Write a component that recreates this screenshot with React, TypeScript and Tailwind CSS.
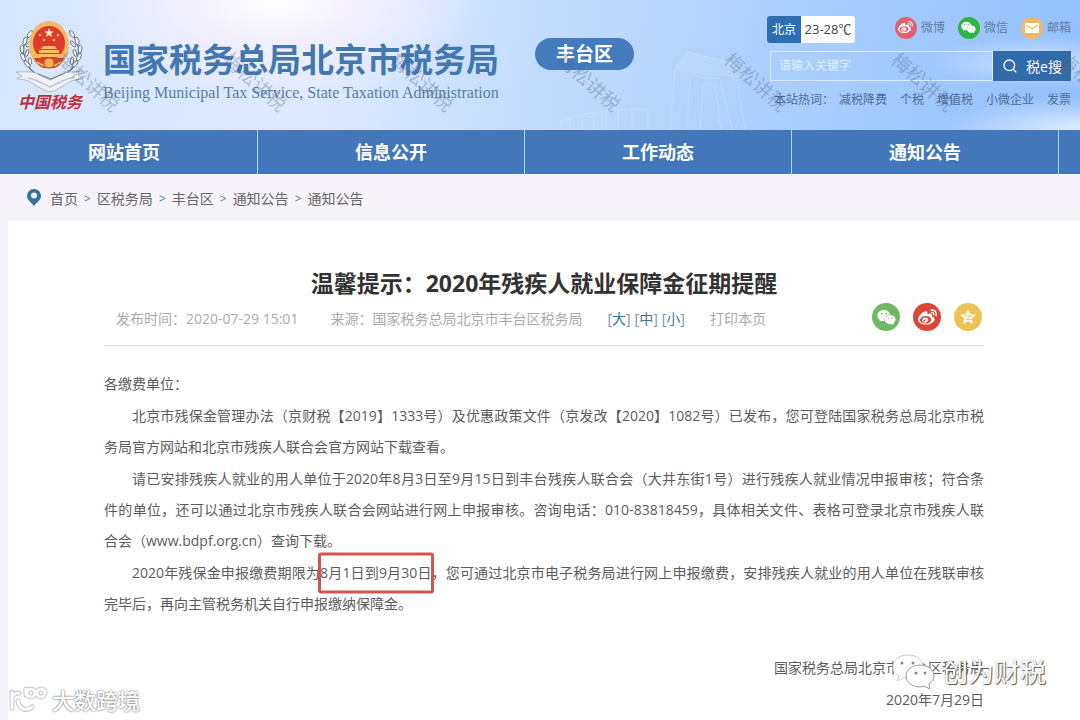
import { FormEvent, useState } from 'react';
import { FaWeibo, FaWeixin } from 'react-icons/fa';
import { Search } from 'lucide-react';

const NAV = ['网站首页', '信息公开', '工作动态', '通知公告'];
const CRUMBS = ['首页', '区税务局', '丰台区', '通知公告', '通知公告'];
const HOT_WORDS = ['减税降费', '个税', '增值税', '小微企业', '发票'];
const STAMPS = [0, 1, 2, 3, 4, 5, 6];

function Emblem() {
    return (
        <svg viewBox="0 0 72 76" className="h-[76px] w-[72px]" aria-hidden="true">
            {/* wheat ears */}
            <g fill="none" stroke="#6b7280" strokeWidth="1.3">
                <path d="M16 12C5 22 3 42 20 54" />
                <path d="M54 12C65 22 67 42 50 54" />
            </g>
            <g fill="#f8fafc" stroke="#5f6b7a" strokeWidth="0.9">
                <ellipse cx="14" cy="14" rx="1.8" ry="4" transform="rotate(35 14 14)" />
                <ellipse cx="9" cy="21" rx="1.8" ry="4" transform="rotate(15 9 21)" />
                <ellipse cx="6" cy="29" rx="1.8" ry="4" transform="rotate(-5 6 29)" />
                <ellipse cx="7" cy="37" rx="1.8" ry="4" transform="rotate(-22 7 37)" />
                <ellipse cx="11" cy="44" rx="1.8" ry="4" transform="rotate(-40 11 44)" />
                <ellipse cx="13" cy="24" rx="1.6" ry="3.6" transform="rotate(40 13 24)" />
                <ellipse cx="11" cy="33" rx="1.6" ry="3.6" transform="rotate(20 11 33)" />
                <ellipse cx="14" cy="41" rx="1.6" ry="3.6" transform="rotate(-10 14 41)" />
                <ellipse cx="56" cy="14" rx="1.8" ry="4" transform="rotate(-35 56 14)" />
                <ellipse cx="61" cy="21" rx="1.8" ry="4" transform="rotate(-15 61 21)" />
                <ellipse cx="64" cy="29" rx="1.8" ry="4" transform="rotate(5 64 29)" />
                <ellipse cx="63" cy="37" rx="1.8" ry="4" transform="rotate(22 63 37)" />
                <ellipse cx="59" cy="44" rx="1.8" ry="4" transform="rotate(40 59 44)" />
                <ellipse cx="57" cy="24" rx="1.6" ry="3.6" transform="rotate(-40 57 24)" />
                <ellipse cx="59" cy="33" rx="1.6" ry="3.6" transform="rotate(-20 59 33)" />
                <ellipse cx="56" cy="41" rx="1.6" ry="3.6" transform="rotate(10 56 41)" />
            </g>
            {/* ribbon */}
            <path d="M0 52c8 0 14-1 20 1l14 7 14-7c6-2 13-1 20-2l-6 4 5 4c-8 0-13 2-18 6l-9 5-6 2-6-2-9-5c-5-4-10-6-18-6l5-3z" fill="#eef1f5" stroke="#a3abb8" strokeWidth="0.8" />
            <path d="M12 58c8 1 15 6 22 9 9-4 16-9 25-10" fill="none" stroke="#c0c6cf" strokeWidth="1.5" />
            <path d="M22 54l13 5 14-6" fill="none" stroke="#7b8491" strokeWidth="1.2" />
            {/* national emblem */}
            <ellipse cx="33" cy="25" rx="20" ry="24" fill="#f0ba69" />
            <ellipse cx="33" cy="23" rx="16" ry="17" fill="#e03a2c" />
            <path d="M33 8l1.300 3.200 3.400.2-2.600 2.200.9 3.300-3-1.800-3 1.800.9-3.300-2.600-2.200 3.400-.2z" fill="#fff0b5" />
            <g fill="#f7bf62">
                <circle cx="24" cy="15" r="1.300" />
                <circle cx="42" cy="15" r="1.300" />
                <circle cx="28" cy="20" r="1.300" />
                <circle cx="38" cy="20" r="1.300" />
                <path d="M27 26h12l2 3H25zM23 30h20v3H23zM19 34h28v3H19z" />
            </g>
            <path d="M18 38h30c-2 5-5 8-9 10H27c-4-2-7-5-9-10z" fill="#d9412f" />
            <circle cx="33" cy="43" r="5" fill="#efb358" stroke="#c9532d" strokeWidth="1" />
            <path d="M21 42l7 4M45 42l-7 4" stroke="#f0bd67" strokeWidth="2" />
        </svg>
    );
}

function Skyline() {
    return (
        <svg viewBox="0 0 280 90" className="pointer-events-none absolute bottom-0 left-[540px] h-[90px] w-[280px]" aria-hidden="true">
            <g fill="none" stroke="#e3f1ff" strokeOpacity="0.35">
                <path d="M130 90l5-60 12-18 48 12 10 66M147 90l3-54 30 3 12 51M160 90l3-46h12l6 46" />
                <path d="M20 82c20-10 60-14 88-12M20 82l3 8M108 70v20M30 78v12M42 75v15M54 73v17M66 72v18M78 71v19M92 70v20" />
            </g>
            <path d="M135 30l12-18 48 12 3 14-48-4z" fill="#e3f1ff" fillOpacity="0.15" />
        </svg>
    );
}

function Header() {
    const [keyword, setKeyword] = useState('');

    const onSearch = (event: FormEvent<HTMLFormElement>) => {
        event.preventDefault();
    };

    return (
        <header className="relative flex h-[130px] justify-between overflow-hidden bg-[radial-gradient(ellipse_210px_100px_at_275px_0px,#ffffff_0%,#f3f0fd_40%,transparent_100%),radial-gradient(ellipse_130px_30px_at_1075px_128px,#dcebff_0%,transparent_100%),radial-gradient(ellipse_110px_26px_at_1040px_62px,#cde2ff_0%,transparent_100%),linear-gradient(100deg,#d6e6fd_0%,#dfe9fe_30%,#c3dcfe_50%,#a9cffd_72%,#93c1fc_100%)] pr-[9px] pl-4">
            <Skyline />
            <div className="relative flex">
                <div className="flex w-[72px] flex-col items-center pt-5">
                    <Emblem />
                    <span className="-mt-1 pr-1 text-[16px] leading-5 font-bold text-[#bd2f3c] italic">中国税务</span>
                </div>
                <div className="ml-[15px] pt-9">
                    <h1 className="text-[33px] leading-12 font-bold whitespace-nowrap text-[#4377b0]">国家税务总局北京市税务局</h1>
                    <p className="font-['Liberation_Serif',serif] text-[16px] leading-[18px] whitespace-nowrap text-[#55809f]">
                        Beijing Municipal Tax Service, State Taxation Administration
                    </p>
                </div>
                <span className="mt-[38px] ml-9 flex h-8 w-[99px] items-center justify-center rounded-full bg-[#437bbd] text-[19px] font-bold text-white">丰台区</span>
            </div>

            <div className="relative flex w-[304px] flex-col pt-4">
                <div className="flex items-center justify-between">
                    <div className="flex h-[27px] overflow-hidden rounded-[3px] bg-white text-[13px] leading-[27px] text-[#444]">
                        <span className="w-[34px] bg-[#2c6fb0] text-center text-[12px] text-white">北京</span>
                        <span className="w-[54px] text-center">23-28℃</span>
                    </div>
                    <div className="flex gap-[13px] pb-1 text-[12px] text-[#5f7da6]">
                        <a href="#weibo" className="flex items-center gap-1">
                            <span className="flex size-[22px] items-center justify-center rounded-full bg-[#e2606c] text-white"><FaWeibo size={15} /></span>
                            微博
                        </a>
                        <a href="#weixin" className="flex items-center gap-1">
                            <span className="flex size-[22px] items-center justify-center rounded-full bg-[#2fb541] text-white"><FaWeixin size={15} /></span>
                            微信
                        </a>
                        <a href="#mail" className="flex items-center gap-1">
                            <span className="flex size-[22px] items-center justify-center rounded-full bg-[#eeb866]">
                                <svg viewBox="0 0 14 10" className="h-[10px] w-[14px]" aria-hidden="true">
                                    <rect width="14" height="10" rx="1" fill="#fff" />
                                    <path d="M1 2l6 4 6-4" fill="none" stroke="#eeb866" strokeWidth="1.200" />
                                </svg>
                            </span>
                            邮箱
                        </a>
                    </div>
                </div>
                <form className="mt-2 ml-[3px] flex h-[30px]" onSubmit={onSearch}>
                    <input
                        aria-label="搜索"
                        value={keyword}
                        onChange={(event) => setKeyword(event.target.value)}
                        placeholder="请输入关键字"
                        className="min-w-0 flex-1 border border-[#dceefb] px-2 text-[12px] text-white outline-none placeholder:text-[#e2f1ff]"
                    />
                    <button type="submit" className="flex w-[78px] items-center justify-center gap-2 bg-[#316ba9] text-[14px] text-white">
                        <Search size={16} />税e搜
                    </button>
                </form>
                <div className="mt-[9px] ml-[7px] flex justify-between text-[12px] leading-5 whitespace-nowrap text-[#4f6c95]">
                    <span className="-mr-2">本站热词：</span>
                    {HOT_WORDS.map((word) => <a key={word} href="#hot">{word}</a>)}
                </div>
            </div>

            {/* diagonal stamps over the banner */}
            {STAMPS.map((n) => (
                <span
                    key={n}
                    className="pointer-events-none absolute top-[70px] w-[88px] rotate-[42deg] text-center text-[19px] leading-6 whitespace-nowrap text-[#4a6285]/35"
                    style={{ left: 44 + n * 167 }}
                >
                    梅松讲税
                </span>
            ))}
        </header>
    );
}

function NavBar() {
    return (
        <nav className="grid h-11 grid-cols-[258fr_267fr_267fr_267fr_21fr] bg-[#4377b9] text-[18px] font-bold text-white">
            {NAV.map((item, i) => (
                <a key={item} href="#nav" className={`flex items-center justify-center border-r border-[#a9dcea] pt-px ${i === 0 ? 'pr-[9px]' : ''}`}>
                    {item}
                </a>
            ))}
        </nav>
    );
}

function Breadcrumb() {
    return (
        <div className="flex h-[47px] items-center gap-[9px] pl-[27px] text-[14px] text-[#666]">
            <svg viewBox="0 0 14 17" className="h-[17px] w-[14px]" aria-hidden="true">
                <path d="M7 0a7 7 0 0 0-7 7c0 4 4 6 7 10 3-4 7-6 7-10a7 7 0 0 0-7-7z" fill="#34719f" />
                <circle cx="7" cy="6.500" r="3" fill="#f6f3fa" />
            </svg>
            <div className="flex items-center gap-[6px] pt-px">
                {CRUMBS.map((crumb, i) => (
                    <span key={i} className="flex items-center gap-[6px]">
                        {i > 0 && <span className="pt-[2px] text-[12px] text-[#4d7f95]">&gt;</span>}
                        <a href="#crumb">{crumb}</a>
                    </span>
                ))}
            </div>
        </div>
    );
}

function ShareButtons() {
    return (
        <div className="flex gap-[13px] pr-[2px] text-white">
            <button type="button" aria-label="微信" className="flex size-7 items-center justify-center rounded-full bg-[#70b963]"><FaWeixin size={19} /></button>
            <button type="button" aria-label="微博" className="flex size-7 items-center justify-center rounded-full bg-[#dc4639]"><FaWeibo size={19} /></button>
            <button type="button" aria-label="QQ空间" className="flex size-7 items-center justify-center rounded-full bg-[#efc353]">
                <svg viewBox="0 0 20 20" className="size-5" aria-hidden="true">
                    <path d="M10 2l2.300 5.300 5.700.5-4.300 3.800 1.300 5.600-5-3-5 3 1.300-5.600L2 7.800l5.700-.5z" fill="#fff" />
                    <path d="M6.500 9.200c2.500-.6 4.500-.5 6.500-.1l-4.500 3.400c2 .4 4 .3 6-.2" fill="none" stroke="#efc353" strokeWidth="1" />
                </svg>
            </button>
        </div>
    );
}

function Article() {
    return (
        <article className="px-24 pt-[46px] text-[14px]">
            <h2 className="text-center text-[23px] leading-8 font-bold text-[#333]">温馨提示：2020年残疾人就业保障金征期提醒</h2>
            <div className="flex h-[47px] items-start justify-between border-b border-[#dedede] pt-1 pl-3 text-[#aaa]">
                <div className="flex pt-[6px] leading-5 whitespace-nowrap">
                    <span>发布时间：2020-07-29 15:01</span>
                    <span className="ml-8">来源：国家税务总局北京市丰台区税务局</span>
                    <span className="ml-[25px] flex gap-1 text-[#7f8f9f]">
                        <button type="button">[<span className="text-[#3d739c]">大</span>]</button>
                        <button type="button">[<span className="text-[#3d739c]">中</span>]</button>
                        <button type="button">[<span className="text-[#3d739c]">小</span>]</button>
                    </span>
                    <button type="button" className="ml-[25px]">打印本页</button>
                </div>
                <ShareButtons />
            </div>

            <div className="flex flex-col gap-px pt-[22px] text-justify leading-[31px] text-[#5c5c5c]">
                <p>各缴费单位：</p>
                <p className="indent-7">
                    北京市残保金管理办法（京财税【2019】1333号）及优惠政策文件（京发改【2020】1082号）已发布，您可登陆国家税务总局北京市税务局官方网站和北京市残疾人联合会官方网站下载查看。
                </p>
                <p className="indent-7">
                    请已安排残疾人就业的用人单位于2020年8月3日至9月15日到丰台残疾人联合会（大井东街1号）进行残疾人就业情况申报审核；符合条<span className="whitespace-nowrap">件的单位</span>，还可以通过北京市残疾人联合会网站进行网上申报审核。咨询电话：010-83818459，具体相关文件、表格可登录北京市残疾人联<span className="whitespace-nowrap">合会</span>（www.bdpf.org.cn）查询下载。
                </p>
                <p className="indent-7">
                    2020年残保金申报缴费期限为
                    <span className="relative">
                        8月1日到9月30日
                        <span className="absolute -inset-x-[2px] top-1/2 h-[41px] -translate-y-1/2 rounded-[3px] border-3 border-[#cf5750]" />
                    </span>
                    ，您可通过北京市电子税务局进行网上申报缴费，安排残疾人就业的用人单位在残联审核完毕后，再向主管税务机关自行申报缴纳保障金。
                </p>
                <p className="mt-8 text-right">国家税务总局北京市丰台区税务局</p>
                <p className="text-right">2020年7月29日</p>
            </div>
        </article>
    );
}

function AccountMark() {
    return (
        <div className="pointer-events-none absolute right-[34px] bottom-[28px] flex items-center gap-1">
            <svg viewBox="0 0 48 40" className="h-10 w-12" aria-hidden="true">
                <g fill="#fff" stroke="#999" strokeWidth="1">
                    <path d="M18 3C9 3 3 8 3 15c0 4 2 7 6 9l-2 5 6-3c9 2 20-2 20-11C33 8 27 3 18 3z" stroke="#ccc" />
                    <path d="M30 13c-8 0-14 5-14 11s6 11 14 11l4-1 6 3-1-5c3-2 5-5 5-8 0-6-6-11-14-11z" />
                </g>
                <g fill="#888">
                    <circle cx="12" cy="11" r="1.500" />
                    <circle cx="23" cy="11" r="1.500" />
                    <circle cx="26" cy="21" r="1.500" />
                    <circle cx="35" cy="21" r="1.500" />
                </g>
            </svg>
            <span className="text-[26px] leading-9 text-white [text-shadow:1px_1px_1px_#555,0_0_1px_#777]">创为财税</span>
        </div>
    );
}

function SiteMark() {
    return (
        <div className="pointer-events-none absolute bottom-[4px] left-2 flex items-center gap-[2px]">
            <svg viewBox="0 0 42 30" className="h-[30px] w-[42px]" aria-hidden="true">
                <g fill="none" stroke="#c4c4c4" strokeWidth="5" strokeLinecap="round">
                    <path d="M4 7v16M4 13c1-4 3-5 7-5M10 16c1 8 8 11 14 6" />
                    <circle cx="23" cy="8" r="4" />
                    <circle cx="33" cy="8" r="4" />
                    <path d="M18 4v6" />
                </g>
                <g fill="none" stroke="#fff" strokeWidth="3" strokeLinecap="round">
                    <path d="M4 7v16M4 13c1-4 3-5 7-5M10 16c1 8 8 11 14 6" />
                    <circle cx="23" cy="8" r="4" />
                    <circle cx="33" cy="8" r="4" />
                    <path d="M18 4v6" />
                </g>
            </svg>
            <span className="text-[22px] leading-8 font-medium text-white [text-shadow:0_0_2px_#777,0_0_2px_#999]">大数跨境</span>
        </div>
    );
}

export default function App() {
    return (
        <div className="relative min-h-screen overflow-hidden bg-[#f6f3fa] font-['Open_Sans','Noto_Sans_CJK_SC',sans-serif]">
            <Header />
            <NavBar />
            <Breadcrumb />
            <main className="ml-2 min-h-[499px] bg-white">
                <Article />
            </main>
            <AccountMark />
            <SiteMark />
        </div>
    );
}
